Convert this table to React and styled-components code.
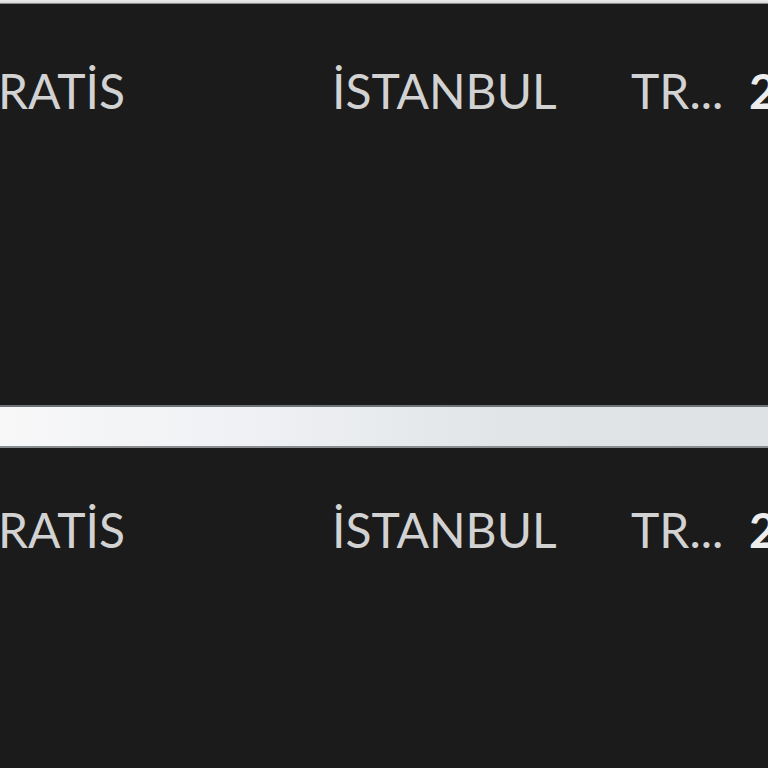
import styled, { createGlobalStyle } from "styled-components";

const Global = createGlobalStyle`
  html, body {
    margin: 0;
    padding: 0;
    background: #1b1b1b;
    overflow: hidden;
  }
`;

const Page = styled.div`
  width: 768px;
  height: 768px;
  display: flex;
  flex-direction: column;
  background: #1b1b1b;
  overflow: hidden;
`;

const TopStrip = styled.div`
  height: 4px;
  flex-shrink: 0;
  background: linear-gradient(to bottom, #ececec 0%, #d8d8d8 70%, #555 100%);
`;

const Panel = styled.div`
  height: ${(p) => p.$height}px;
  flex-shrink: 0;
  background: #1b1b1b;
  padding-top: ${(p) => p.$top}px;
  box-sizing: border-box;
`;

const Divider = styled.div`
  height: 43px;
  flex-shrink: 0;
  box-sizing: border-box;
  border-top: 2px solid #6f7376;
  border-bottom: 2px solid #8a8d90;
  background: linear-gradient(
    to right,
    #f8f8f9 0%,
    #eef0f3 35%,
    #e2e5e8 65%,
    #dfe2e5 100%
  );
`;

const Row = styled.div`
  display: flex;
  align-items: baseline;
  white-space: nowrap;
  font-family: Lato, "Open Sans", sans-serif;
  font-size: 48px;
  font-weight: 400;
  line-height: 1.4;
  color: #d2d2d2;
`;

const Cell = styled.div`
  flex: 0 0 ${(p) => p.$width}px;
  margin-left: ${(p) => p.$offset || 0}px;
  font-weight: ${(p) => (p.$strong ? 700 : 400)};
  color: ${(p) => (p.$strong ? "#ededed" : "inherit")};
`;

function ListRow() {
  return (
    <Row>
      <Cell $width={334} $offset={-2}>RATİS</Cell>
      <Cell $width={299}>İSTANBUL</Cell>
      <Cell $width={118}>TR...</Cell>
      <Cell $width={60} $strong>2</Cell>
    </Row>
  );
}

export default function App() {
  return (
    <>
      <Global />
      <Page>
        <TopStrip />
        <Panel $height={401} $top={53}>
          <ListRow />
        </Panel>
        <Divider />
        <Panel $height={320} $top={48}>
          <ListRow />
        </Panel>
      </Page>
    </>
  );
}
